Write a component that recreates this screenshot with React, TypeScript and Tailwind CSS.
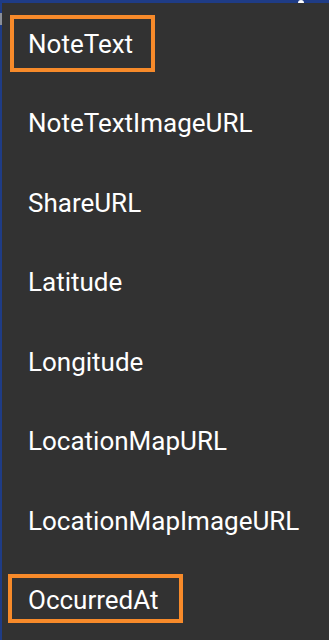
import React from 'react';

const items = [
  'NoteText',
  'NoteTextImageURL',
  'ShareURL',
  'Latitude',
  'Longitude',
  'LocationMapURL',
  'LocationMapImageURL',
  'OccurredAt',
];

export default function App() {
  return (
    <div className="relative w-[329px] h-[640px] overflow-hidden bg-[#1f3c86]" style={{ fontFamily: 'Roboto, "Noto Sans", sans-serif' }}>
      {/* status strip peeking above the menu */}
      <div className="relative h-[3px]">
        <div className="absolute left-[298px] top-0 w-[6px] h-[3px] rounded-t-full bg-white" />
      </div>
      <div className="flex">
        {/* left edge of the screen behind */}
        <div className="w-[2px] flex flex-col">
          <div className="h-[10px]" />
          <div className="h-[12px] bg-[#8a8f99]" />
          <div className="flex-1" />
        </div>
        <div className="flex-1 bg-[#323232] h-[637px] pt-[1px]">
          {items.map((name, i) => (
            <div key={name} className="relative h-[79.5px] flex items-center pl-[26px]">
              <span className="text-[26px] leading-none text-white">{name}</span>
              {i === 0 && (
                <div className="absolute left-[8px] top-[11px] w-[145px] h-[57px] border-4 border-[#f78a2a]" />
              )}
              {i === items.length - 1 && (
                <div className="absolute left-[6px] top-[13px] w-[175px] h-[49px] border-4 border-[#f78a2a]" />
              )}
            </div>
          ))}
        </div>
      </div>
    </div>
  );
}
